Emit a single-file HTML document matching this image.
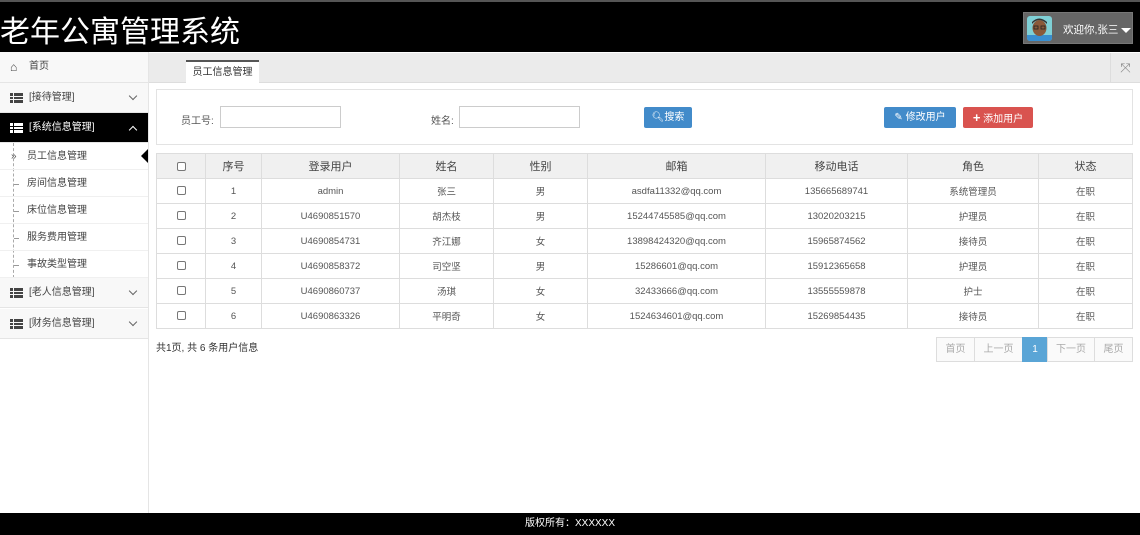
<!DOCTYPE html>
<html><head><meta charset="utf-8"><style>
*{margin:0;padding:0;box-sizing:border-box}
body{width:1140px;height:535px;position:relative;overflow:hidden;background:#fff;font-family:"Liberation Sans","Noto Sans CJK SC",sans-serif;font-size:10px;color:#555}
.hdr{position:absolute;left:0;top:0;width:1140px;height:52px;background:#000;border-top:2px solid #555}
.hdr h1{position:absolute;left:0;top:5px;font-weight:normal;color:#fff;font-size:30px;white-space:nowrap}
.user{position:absolute;left:1023px;top:10px;width:110px;height:32px;background:#666;border:1px solid #777}
.av{position:absolute;left:3px;top:3px;width:25px;height:25px;background:#7fd0d6;border-radius:3px;overflow:hidden}
.user span{position:absolute;left:39px;top:9px;color:#fff;font-size:10.5px;white-space:nowrap}
.user i{position:absolute;left:97px;top:15px;border:5px solid transparent;border-top:5px solid #fff}
.side{position:absolute;left:0;top:52px;width:149px;height:461px;border-right:1px solid #e5e5e5;background:#fff}
.it{position:absolute;left:0;width:148px;height:30px;border-bottom:1px solid #e5e5e5;background:#f8f8f8;font-size:10px;color:#444;line-height:30px;padding-left:29px}
.it .ic{position:absolute;left:10px;top:10px;width:13px;height:10px;background:linear-gradient(#444 0 3px,transparent 3px 4px,#444 4px 6px,transparent 6px 7px,#444 7px)}
.it .ic:after{content:"";position:absolute;left:3px;top:0;width:1px;height:10px;background:#f8f8f8}
.it.act{background:#000;color:#fff}
.it.act .ic{background:linear-gradient(#fff 0 3px,transparent 3px 4px,#fff 4px 6px,transparent 6px 7px,#fff 7px)}
.it.act .ic:after{background:#000}
.chev{position:absolute;right:12px;top:10px;width:6px;height:6px;border-right:1.3px solid #666;border-bottom:1.3px solid #666;transform:rotate(45deg)}
.act .chev{top:14px;border-color:#fff;transform:rotate(-135deg)}
.sub{position:absolute;left:0;width:148px;height:27px;border-bottom:1px solid #f0f0f0;line-height:27px;padding-left:27px;color:#444;font-size:10px}
.sub:before{content:"";position:absolute;left:14px;top:14px;width:5px;height:1px;background:#999}
.sub.a:before{display:none}
.vl{position:absolute;left:13px;width:1px;height:135px;border-left:1px dashed #aaa}
.tabbar{position:absolute;left:149px;top:53px;width:991px;height:30px;background:#ebebeb;border-bottom:1px solid #ddd}
.tab{position:absolute;left:37px;top:7px;width:73px;height:24px;background:#fff;border-top:2px solid #555;text-align:center;line-height:22px;color:#333}
.fs{position:absolute;right:0;top:0;width:30px;height:30px;border-left:1px solid #ddd;color:#888;font-size:13px;text-align:center;line-height:30px}
.panel{position:absolute;left:156px;top:89px;width:977px;height:56px;border:1px solid #e3e3e3}
.lb{position:absolute;top:22px;color:#555}
.inp{position:absolute;top:16px;width:121px;height:22px;border:1px solid #ccc}
.btn{position:absolute;top:17px;height:21px;border-radius:2px;color:#fff;line-height:21px;text-align:center;font-size:10px;white-space:nowrap}
table{position:absolute;left:156px;top:153px;border-collapse:collapse;width:977px;font-size:9.5px}
td,th{border:1px solid #ddd;text-align:center;color:#555;font-weight:normal;height:25px}
th{background:#f0f0f0;font-size:11px;color:#444;height:25px}
.cb{display:inline-block;width:9px;height:9px;border:1px solid #777;border-radius:2px;vertical-align:middle;background:#fff}
.info{position:absolute;left:156px;top:339px;color:#333}
.pg{position:absolute;left:937px;top:337px;height:25px;display:flex}
.pg div{border:1px solid #ddd;margin-left:-1px;height:25px;line-height:24px;color:#aaa;background:#fafafa;text-align:center;white-space:nowrap}
.pg .on{background:#5aa5d6;color:#fff;border-color:#5aa5d6}
.ftr{position:absolute;left:0;top:513px;width:1140px;height:22px;background:#000;color:#fff;text-align:center;line-height:22px;font-size:10px}
</style></head><body>
<div class="hdr"><h1>老年公寓管理系统</h1>
<div class="user"><div class="av"><svg width="25" height="25"><rect x="0" y="19" width="25" height="6" fill="#3a8fd0"/><ellipse cx="12.5" cy="12" rx="7" ry="8" fill="#8a5a3a"/><path d="M5 8 Q12 0 20 8 L20 6 Q12 -1 5 6Z" fill="#333"/><rect x="7" y="10" width="4" height="3" fill="none" stroke="#222" stroke-width="0.8"/><rect x="14" y="10" width="4" height="3" fill="none" stroke="#222" stroke-width="0.8"/></svg></div><span>欢迎你,张三</span><i></i></div></div>
<div class="side">
<div class="it" style="top:0;height:31px"><span style="position:absolute;left:10px;font-size:12px">⌂</span>首页</div>
<div class="it" style="top:31px"><span class="ic"></span>[接待管理]<span class="chev"></span></div>
<div class="it act" style="top:61px"><span class="ic"></span>[系统信息管理]<span class="chev"></span></div>
<div class="vl" style="top:91px"></div>
<div class="sub a" style="top:91px">员工信息管理<span style="position:absolute;left:11px;color:#555">»</span><span style="position:absolute;right:0;top:6px;border:7px solid transparent;border-right:7px solid #000;border-left:0"></span></div>
<div class="sub" style="top:118px">房间信息管理</div>
<div class="sub" style="top:145px">床位信息管理</div>
<div class="sub" style="top:172px">服务费用管理</div>
<div class="sub" style="top:199px">事故类型管理</div>
<div class="it" style="top:226px"><span class="ic"></span>[老人信息管理]<span class="chev"></span></div>
<div class="it" style="top:257px"><span class="ic"></span>[财务信息管理]<span class="chev"></span></div>
</div>
<div class="tabbar"><div class="tab">员工信息管理</div><div class="fs">⤧</div></div>
<div class="panel">
<span class="lb" style="left:24px">员工号:</span><div class="inp" style="left:63px"></div>
<span class="lb" style="left:274px">姓名:</span><div class="inp" style="left:302px"></div>
<div class="btn" style="left:487px;width:48px;background:#428bca">&#x1F50D;&#xFE0E;搜索</div>
<div class="btn" style="left:727px;width:72px;background:#428bca">✎ 修改用户</div>
<div class="btn" style="left:806px;width:70px;background:#d9534f"><b style="font-size:13px">+</b> 添加用户</div>
</div>
<table>
<tr><th style="width:49px"><span class="cb"></span></th><th style="width:56px">序号</th><th style="width:138px">登录用户</th><th style="width:94px">姓名</th><th style="width:94px">性别</th><th style="width:178px">邮箱</th><th style="width:142px">移动电话</th><th style="width:131px">角色</th><th>状态</th></tr>
<tr><td><span class="cb"></span></td><td>1</td><td>admin</td><td>张三</td><td>男</td><td>asdfa11332@qq.com</td><td>135665689741</td><td>系统管理员</td><td>在职</td></tr>
<tr><td><span class="cb"></span></td><td>2</td><td>U4690851570</td><td>胡杰枝</td><td>男</td><td>15244745585@qq.com</td><td>13020203215</td><td>护理员</td><td>在职</td></tr>
<tr><td><span class="cb"></span></td><td>3</td><td>U4690854731</td><td>齐江娜</td><td>女</td><td>13898424320@qq.com</td><td>15965874562</td><td>接待员</td><td>在职</td></tr>
<tr><td><span class="cb"></span></td><td>4</td><td>U4690858372</td><td>司空坚</td><td>男</td><td>15286601@qq.com</td><td>15912365658</td><td>护理员</td><td>在职</td></tr>
<tr><td><span class="cb"></span></td><td>5</td><td>U4690860737</td><td>汤琪</td><td>女</td><td>32433666@qq.com</td><td>13555559878</td><td>护士</td><td>在职</td></tr>
<tr><td><span class="cb"></span></td><td>6</td><td>U4690863326</td><td>平明奇</td><td>女</td><td>1524634601@qq.com</td><td>15269854435</td><td>接待员</td><td>在职</td></tr>
</table>
<div class="info">共1页, 共 6 条用户信息</div>
<div class="pg"><div style="width:39px">首页</div><div style="width:49px">上一页</div><div class="on" style="width:26px">1</div><div style="width:48px">下一页</div><div style="width:39px">尾页</div></div>
<div class="ftr">版权所有：XXXXXX</div>
</body></html>
